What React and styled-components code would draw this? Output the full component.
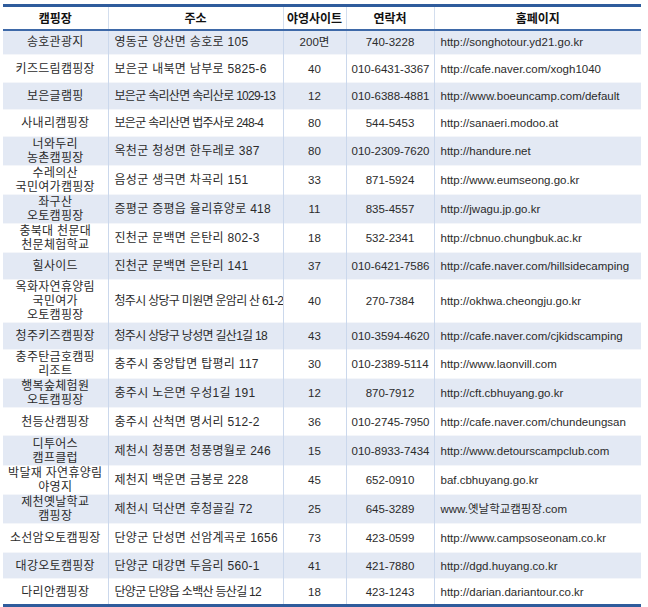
import React from 'react';
import styled, { createGlobalStyle } from 'styled-components';

const GlobalStyle = createGlobalStyle`
    html, body {
        margin: 0;
        padding: 0;
        background: #ffffff;
    }
    body {
        font-family: "Liberation Sans", "Noto Sans CJK KR", sans-serif;
    }
`

const rows = [
    { name: ['송호관광지'], addr: '영동군 양산면 송호로 105', sites: '200면', tel: '740-3228', url: 'http://songhotour.yd21.go.kr', h: 25 },
    { name: ['키즈드림캠핑장'], addr: '보은군 내북면 남부로 5825-6', sites: '40', tel: '010-6431-3367', url: 'http://cafe.naver.com/xogh1040', h: 28 },
    { name: ['보은글램핑'], addr: '보은군 속리산면 속리산로 1029-13', tight: true, sites: '12', tel: '010-6388-4881', url: 'http://www.boeuncamp.com/default', h: 27 },
    { name: ['사내리캠핑장'], addr: '보은군 속리산면 법주사로 248-4', tight: true, sites: '80', tel: '544-5453', url: 'http://sanaeri.modoo.at', h: 27 },
    { name: ['너와두리', '농촌캠핑장'], addr: '옥천군 청성면 한두레로 387', sites: '80', tel: '010-2309-7620', url: 'http://handure.net', h: 28 },
    { name: ['수레의산', '국민여가캠핑장'], addr: '음성군 생극면 차곡리 151', sites: '33', tel: '871-5924', url: 'http://www.eumseong.go.kr', h: 28 },
    { name: ['좌구산', '오토캠핑장'], addr: '증평군 증평읍 율리휴양로 418', sites: '11', tel: '835-4557', url: 'http://jwagu.jp.go.kr', h: 28 },
    { name: ['충북대 천문대', '천문체험학교'], addr: '진천군 문백면 은탄리 802-3', sites: '18', tel: '532-2341', url: 'http://cbnuo.chungbuk.ac.kr', h: 29 },
    { name: ['힐사이드'], addr: '진천군 문백면 은탄리 141', sites: '37', tel: '010-6421-7586', url: 'http://cafe.naver.com/hillsidecamping', h: 27 },
    { name: ['옥화자연휴양림', '국민여가', '오토캠핑장'], addr: '청주시 상당구 미원면 운암리 산 61-2', tight: true, sites: '40', tel: '270-7384', url: 'http://okhwa.cheongju.go.kr', h: 43 },
    { name: ['청주키즈캠핑장'], addr: '청주시 상당구 낭성면 길산1길 18', tight: true, sites: '43', tel: '010-3594-4620', url: 'http://cafe.naver.com/cjkidscamping', h: 27 },
    { name: ['충주탄금호캠핑', '리조트'], addr: '충주시 중앙탑면 탑평리 117', sites: '30', tel: '010-2389-5114', url: 'http://www.laonvill.com', h: 28 },
    { name: ['행복숲체험원', '오토캠핑장'], addr: '충주시 노은면 우성1길 191', sites: '12', tel: '870-7912', url: 'http://cft.cbhuyang.go.kr', h: 27 },
    { name: ['천등산캠핑장'], addr: '충주시 산척면 명서리 512-2', sites: '36', tel: '010-2745-7950', url: 'http://cafe.naver.com/chundeungsan', h: 28 },
    { name: ['디투어스', '캠프클럽'], addr: '제천시 청풍면 청풍명월로 246', sites: '15', tel: '010-8933-7434', url: 'http://www.detourscampclub.com', h: 30 },
    { name: ['박달재 자연휴양림', '야영지'], addr: '제천지 백운면 금봉로 228', sites: '45', tel: '652-0910', url: 'baf.cbhuyang.go.kr', h: 26 },
    { name: ['제천옛날학교', '캠핑장'], addr: '제천시 덕산면 후청골길 72', sites: '25', tel: '645-3289', url: 'www.옛날학교캠핑장.com', h: 29 },
    { name: ['소선암오토캠핑장'], addr: '단양군 단성면 선암계곡로 1656', sites: '73', tel: '423-0599', url: 'http://www.campsoseonam.co.kr', h: 29 },
    { name: ['대강오토캠핑장'], addr: '단양군 대강면 두음리 560-1', sites: '41', tel: '421-7880', url: 'http://dgd.huyang.co.kr', h: 26 },
    { name: ['다리안캠핑장'], addr: '단양군 단양읍 소백산 등산길 12', tight: true, sites: '18', tel: '423-1243', url: 'http://darian.dariantour.co.kr', h: 27 },
];

function App()
{
    return (
        <Page>
            <GlobalStyle />
            <Table>
                <colgroup>
                    <col style={{ width: 105 }} />
                    <col style={{ width: 175 }} />
                    <col style={{ width: 63 }} />
                    <col style={{ width: 88 }} />
                    <col style={{ width: 207 }} />
                </colgroup>
                <thead>
                    <HeadRow>
                        <HeadCell>캠핑장</HeadCell>
                        <HeadCell>주소</HeadCell>
                        <HeadCell>야영사이트</HeadCell>
                        <HeadCell>연락처</HeadCell>
                        <HeadCell>홈페이지</HeadCell>
                    </HeadRow>
                </thead>
                <tbody>
                    {rows.map((r, i) => (
                        <Row key={i} $shade={i % 2 === 0} $h={r.h}>
                            <NameCell>
                                {r.name.map((n, j) => <Line key={j}>{n}</Line>)}
                            </NameCell>
                            <AddrCell $tight={r.tight}>{r.addr}</AddrCell>
                            <NumCell>{r.sites}</NumCell>
                            <NumCell>{r.tel}</NumCell>
                            <UrlCell>{r.url}</UrlCell>
                        </Row>
                    ))}
                </tbody>
            </Table>
        </Page>
    );
}

export default App;

const Page = styled.div`
    width: 648px;
    height: 607px;
    padding: 4px 0 0 3px;
    box-sizing: border-box;
    overflow: hidden;
`

const Table = styled.table`
    width: 638px;
    table-layout: fixed;
    border-collapse: collapse;
    border-top: 3px solid #2f5c9c;
    border-bottom: 3px solid #2f5c9c;
    font-size: 12px;
    color: #2b2b2b;
`

const HeadRow = styled.tr`
    height: 24px;
    border-bottom: 2px solid #3e69a8;
`

const HeadCell = styled.th`
    font-family: "Noto Sans CJK KR", sans-serif;
    font-weight: bold;
    font-size: 12px;
    color: #111111;
    padding: 0;
    text-align: center;
    border-left: 1px solid #d3deee;
    &:first-child {
        border-left: none;
    }
`

const Row = styled.tr`
    height: ${p => p.$h}px;
    background: ${p => (p.$shade ? '#e3e9f4' : '#ffffff')};
    border-bottom: 1px solid #f4f6fa;
`

const Cell = styled.td`
    padding: 0 5px;
    vertical-align: middle;
    line-height: 14px;
    white-space: nowrap;
    overflow: hidden;
    border-left: 1px solid #cbd8ec;
`

const NameCell = styled(Cell)`
    border-left: none;
    padding: 0 2px;
    text-align: center;
    letter-spacing: 0.3px;
`

const AddrCell = styled(Cell)`
    text-align: left;
    padding-left: 6px;
    letter-spacing: ${p => (p.$tight ? '-0.7px' : '0.3px')};
`

const NumCell = styled(Cell)`
    text-align: center;
    font-size: 11.5px;
`

const UrlCell = styled(Cell)`
    text-align: left;
    padding-left: 6px;
    font-size: 11.5px;
`

const Line = styled.div`
    line-height: 14px;
`
